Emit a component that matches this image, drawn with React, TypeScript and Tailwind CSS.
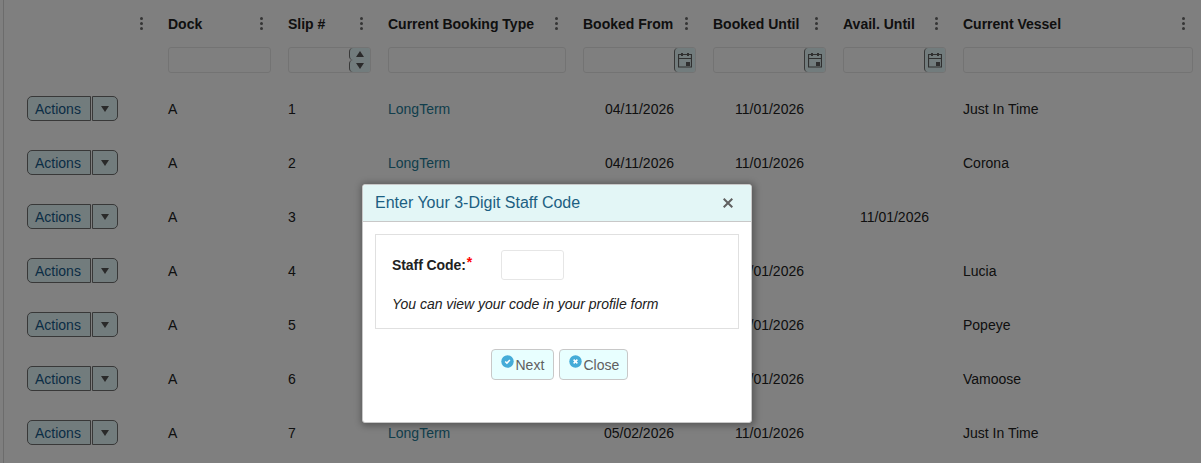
import React from "react";

const rows = [
  { slip: "1", type: "LongTerm", from: "04/11/2026", until: "11/01/2026", avail: "", vessel: "Just In Time" },
  { slip: "2", type: "LongTerm", from: "04/11/2026", until: "11/01/2026", avail: "", vessel: "Corona" },
  { slip: "3", type: "", from: "", until: "", avail: "11/01/2026", vessel: "" },
  { slip: "4", type: "", from: "", until: "11/01/2026", avail: "", vessel: "Lucia" },
  { slip: "5", type: "", from: "", until: "11/01/2026", avail: "", vessel: "Popeye" },
  { slip: "6", type: "", from: "", until: "11/01/2026", avail: "", vessel: "Vamoose" },
  { slip: "7", type: "LongTerm", from: "05/02/2026", until: "11/01/2026", avail: "", vessel: "Just In Time" },
];

const titles = [
  "",
  "Dock",
  "Slip #",
  "Current Booking Type",
  "Booked From",
  "Booked Until",
  "Avail. Until",
  "Current Vessel",
];

const gridCols =
  "grid grid-cols-[124px_103px_83px_178px_113px_113px_103px_230px] gap-x-[17px] items-center";

const Kebab = () => (
  <svg className="-mt-px" width="3" height="13" viewBox="0 0 3 13" fill="#6a6a6a">
    <circle cx="1.5" cy="1.5" r="1.5" />
    <circle cx="1.5" cy="6.5" r="1.5" />
    <circle cx="1.5" cy="11.5" r="1.5" />
  </svg>
);

const CalendarIcon = () => (
  <svg className="-mt-px" width="14" height="16" viewBox="0 0 14 16" fill="none">
    <path d="M.5 2.5h13v12.5H.5zM.5 6.5h13" stroke="#606060" strokeWidth="1.2" />
    <path d="M3 1h2v3H3zM9 1h2v3H9zM8 10h4v4H8z" fill="#606060" />
  </svg>
);

const FilterBox = ({ children }: { children?: React.ReactNode }) => (
  <div className="flex h-[26px] justify-end overflow-hidden rounded-[3px] border border-[#e6e6e6]">
    {children}
  </div>
);

const DateFilter = () => (
  <FilterBox>
    <div className="flex w-[21px] items-center justify-center rounded-l-[4px] border-l border-[#707070] bg-[#e5f8fa]">
      <CalendarIcon />
    </div>
  </FilterBox>
);

const NumberFilter = () => (
  <FilterBox>
    <div className="flex w-[21px] flex-col">
      <div className="flex h-3 items-center justify-center rounded-l-[4px] border-l border-[#707070] bg-[#e5f8fa]">
        <svg width="8" height="6" viewBox="0 0 8 6" fill="#555">
          <path d="M4 0l4 6H0z" />
        </svg>
      </div>
      <div className="flex h-3 items-center justify-center rounded-l-[4px] border-l border-[#707070] bg-[#e5f8fa]">
        <svg width="8" height="6" viewBox="0 0 8 6" fill="#555">
          <path d="M0 0h8L4 6z" />
        </svg>
      </div>
    </div>
  </FilterBox>
);

const SplitButton = () => (
  <div className="mb-px flex h-[25px] w-[91px] gap-px text-[#165a8a]">
    <div className="flex w-16 items-center rounded-l-[5px] border border-[#707070] bg-[#e5f8fa] pt-px pl-[7px]">
      Actions
    </div>
    <div className="flex w-[26px] items-center justify-center rounded-r-[5px] border border-[#707070] bg-[#e5f8fa]">
      <svg width="8" height="6" viewBox="0 0 8 6" fill="#555">
        <path d="M0 0h8L4 6z" />
      </svg>
    </div>
  </div>
);

const SlipGrid = () => (
  <div className="ml-[3px] h-full border-l border-[#d8d8d8] pl-[23px]">
    <div className={`${gridCols} h-12`}>
      {titles.map((title, i) => (
        <div key={i} className="flex items-center justify-between pr-2 font-bold whitespace-nowrap">
          <span>{title}</span>
          <Kebab />
        </div>
      ))}
    </div>
    <div className={`${gridCols} -mt-px h-[26px]`}>
      <div />
      <FilterBox />
      <NumberFilter />
      <FilterBox />
      <DateFilter />
      <DateFilter />
      <DateFilter />
      <FilterBox />
    </div>
    <div className="pt-[9px]">
      {rows.map((row) => (
        <div key={row.slip} className={`${gridCols} h-[54px]`}>
          <SplitButton />
          <span>A</span>
          <span>{row.slip}</span>
          <span className="text-[#247c98]">{row.type}</span>
          <span className="pr-[22px] text-right">{row.from}</span>
          <span className="pr-[22px] text-right">{row.until}</span>
          <span className="pr-[17px] text-right">{row.avail}</span>
          <span>{row.vessel}</span>
        </div>
      ))}
    </div>
  </div>
);

const StaffCodeDialog = () => (
  <div className="flex h-[239px] w-[390px] flex-col overflow-hidden rounded-[3px] border border-[#c8c8c8] bg-white shadow-[1px_1px_7px_2px_rgba(0,0,0,0.3)]">
    <div className="flex h-[37px] shrink-0 items-center justify-between border-b border-[#c8c8c8] bg-[#e3f6f6] pr-[18px] pl-3">
      <span className="text-base text-[#1c5f82]">Enter Your 3-Digit Staff Code</span>
      <svg width="10" height="10" viewBox="0 0 10 10" stroke="#606060" strokeWidth="2">
        <path d="M.7.7l8.6 8.6M9.3.7L.7 9.3" />
      </svg>
    </div>
    <div className="mx-3 mt-3 h-[95px] border border-[#e0e0e0] px-4 pt-[15px]">
      <div className="flex h-[30px] items-center">
        <div className="flex w-[109px] font-bold">
          <span className="tracking-[-0.08px]">Staff Code:</span>
          <span className="-mt-[3px] ml-px text-[#ff0000]">*</span>
        </div>
        <div className="h-[30px] w-[63px] rounded-[3px] border border-[#e6e6e6]" />
      </div>
      <p className="mt-[14px] leading-5 tracking-[-0.03px] italic">
        You can view your code in your profile form
      </p>
    </div>
    <div className="mt-5 ml-1 flex justify-center gap-[5px] text-[#606060]">
      <div className="flex h-[31px] w-[63px] items-center rounded-[4px] border border-[#c8c8c8] bg-[#e8ffff] pl-[9px]">
        <svg className="mr-0.5 mb-[7px]" width="13" height="13" viewBox="0 0 13 13" fill="none">
          <circle cx="6.5" cy="6.5" r="6.2" fill="#45acd8" />
          <path d="M4.2 6.5l1.7 1.6 3-3.2" stroke="#fff" strokeWidth="1.5" />
        </svg>
        <span>Next</span>
      </div>
      <div className="flex h-[31px] w-[69px] items-center rounded-[4px] border border-[#c8c8c8] bg-[#e8ffff] pl-[9px]">
        <svg className="mr-0.5 mb-[7px]" width="13" height="13" viewBox="0 0 13 13" fill="none">
          <circle cx="6.5" cy="6.5" r="6.2" fill="#45acd8" />
          <path d="M4.6 4.6l3.8 3.8M8.4 4.6L4.6 8.4" stroke="#fff" strokeWidth="1.5" />
        </svg>
        <span>Close</span>
      </div>
    </div>
  </div>
);

const App = () => {
  return (
    <div className="relative h-[463px] w-[1201px] overflow-hidden bg-white font-['Liberation_Sans',Arial,sans-serif] text-sm text-[#212121]">
      <SlipGrid />
      {/* modal overlay */}
      <div className="absolute inset-0 flex justify-center bg-black/50 pt-[184px] pr-[87px]">
        <StaffCodeDialog />
      </div>
    </div>
  );
};

export default App;
